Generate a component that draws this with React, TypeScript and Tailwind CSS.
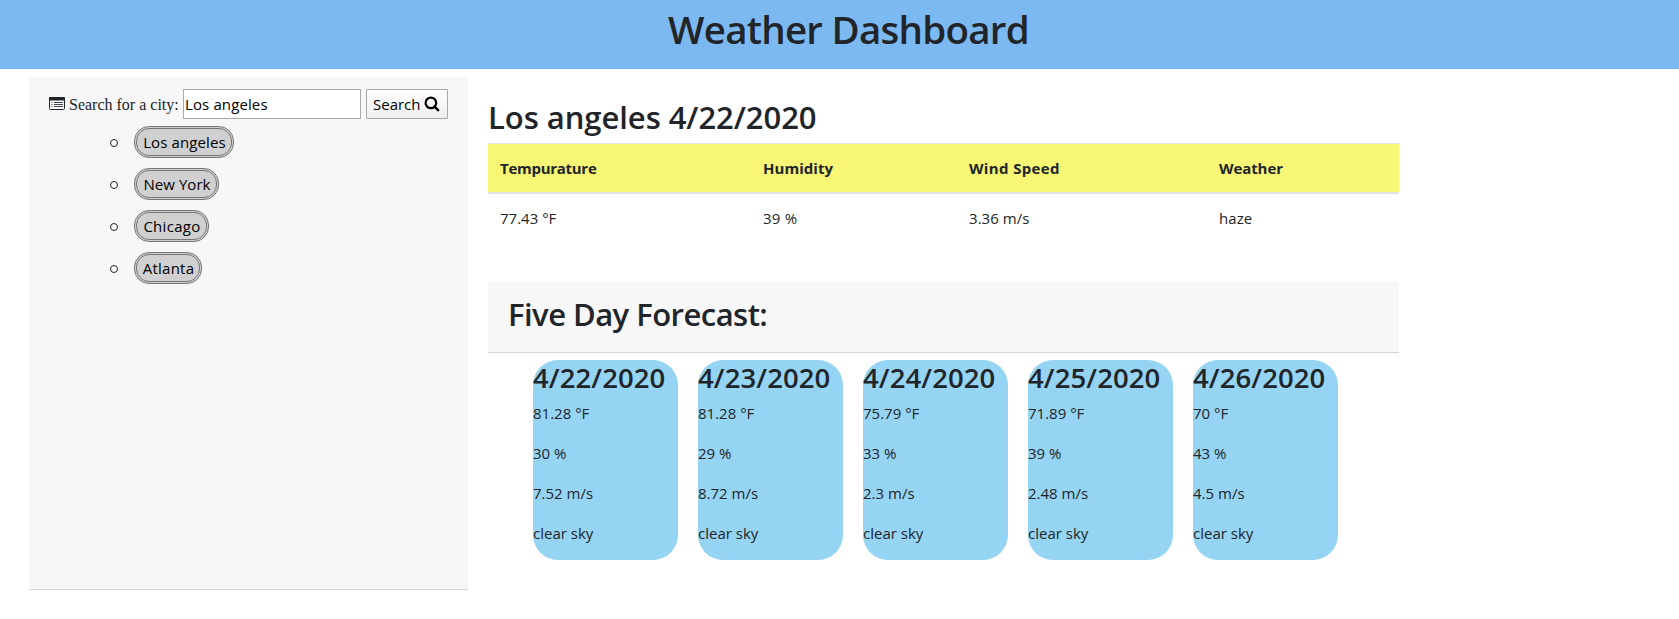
const cities = [
  { name: "Los angeles", width: "w-[100px]", tracking: "tracking-[0.12px]" },
  { name: "New York", width: "w-[85px]", tracking: "tracking-[0.05px]" },
  { name: "Chicago", width: "w-[75px]", tracking: "tracking-[0.3px]" },
  { name: "Atlanta", width: "w-[68px]", tracking: "tracking-[0.25px]" },
];

const conditions = [
  { label: "Tempurature", value: "77.43 °F", width: "w-[263px]", head: "-tracking-[0.28px]", cell: "tracking-normal" },
  { label: "Humidity", value: "39 %", width: "w-[206px]", head: "tracking-[0.03px]", cell: "tracking-[0.2px]" },
  { label: "Wind Speed", value: "3.36 m/s", width: "w-[250px]", head: "tracking-[0.36px]", cell: "tracking-[0.05px]" },
  { label: "Weather", value: "haze", width: "w-[192px]", head: "-tracking-[0.08px]", cell: "tracking-[0.1px]" },
];

const forecast = [
  { date: "4/22/2020", values: ["81.28 °F", "30 %", "7.52 m/s", "clear sky"] },
  { date: "4/23/2020", values: ["81.28 °F", "29 %", "8.72 m/s", "clear sky"] },
  { date: "4/24/2020", values: ["75.79 °F", "33 %", "2.3 m/s", "clear sky"] },
  { date: "4/25/2020", values: ["71.89 °F", "39 %", "2.48 m/s", "clear sky"] },
  { date: "4/26/2020", values: ["70 °F", "43 %", "4.5 m/s", "clear sky"] },
];

function ListIcon() {
  return (
    <svg width="16" height="14" viewBox="0 0 16 14" className="shrink-0 text-[#212529]">
      <rect x="0.5" y="0.5" width="15" height="12" rx="1" fill="#fff" fillOpacity="0.6" stroke="currentColor" />
      <rect x="0" y="0" width="16" height="3.6" rx="1" fill="currentColor" />
      <path d="M2 5.5h2M2 7.5h2M2 9.5h2" stroke="currentColor" strokeOpacity="0.45" />
      <path d="M5 5.5h9M5 7.5h9M5 9.5h9" stroke="currentColor" strokeOpacity="0.85" />
    </svg>
  );
}

function SearchIcon() {
  return (
    <svg width="16" height="16" viewBox="0 0 16 16" fill="none" stroke="#000" className="shrink-0">
      <circle cx="6.9" cy="6.9" r="5.3" strokeWidth="2.2" />
      <path d="M10.8 10.8l3.3 3.3" strokeWidth="2.5" strokeLinecap="round" />
    </svg>
  );
}

function Sidebar() {
  return (
    <aside className="h-[513px] w-[439px] rounded-t-[4px] border-b border-[#d6d6d6] bg-[#f7f7f7] pt-3">
      <form className="flex h-[30px] items-center pl-5" onSubmit={(e) => e.preventDefault()}>
        <ListIcon />
        <label
          htmlFor="city"
          className="ml-1 w-[114px] whitespace-nowrap pt-0.5 font-['Liberation_Serif',serif] text-base leading-6 text-[#212529]"
        >
          Search for a city:
        </label>
        <input
          id="city"
          defaultValue="Los angeles"
          className="h-[30px] w-[178px] border border-[#a9a9a9] bg-white px-px text-[15px] tracking-[0.12px] text-black outline-none"
        />
        <button className="ml-[5px] flex h-[30px] w-[82px] items-center gap-[3px] rounded-[1px] border border-[#a9a9a9] bg-linear-to-b from-white to-[#efefef] pl-1.5 text-[15px] text-black">
          Search
          <SearchIcon />
        </button>
      </form>
      <ul className="flex flex-col gap-2.5 pt-[7px] pl-[81px]">
        {cities.map((c) => (
          <li key={c.name} className="flex items-center gap-4">
            <span className="mt-px size-2 rounded-full border-[1.5px] border-[#212529]" />
            <button
              className={`h-8 rounded-[15px] border-3 border-double border-[#767676] bg-[#d0d0d0] pt-px pl-px text-center text-[15px] whitespace-nowrap text-black ${c.width} ${c.tracking}`}
            >
              {c.name}
            </button>
          </li>
        ))}
      </ul>
    </aside>
  );
}

export default function App() {
  return (
    <div className="h-[619px] overflow-hidden bg-white font-['Open_Sans','Noto_Sans',sans-serif] text-[15px] text-[#212529]">
      <header className="h-[69px] bg-[#7db9f1] pt-[5px] pl-[18px]">
        <h1 className="text-center text-[38.5px] leading-[48px] font-[540] -tracking-[0.75px]">Weather Dashboard</h1>
      </header>
      <div className="flex gap-5 pt-2 pl-[29px]">
        <Sidebar />
        <main className="w-[911px] pt-[21px]">
          <h2 className="mb-[7px] text-[31px] leading-[38px] font-[540] -tracking-[0.05px]">Los angeles 4/22/2020</h2>
          <table className="w-full table-fixed border-collapse text-left leading-6">
            <thead>
              <tr className="bg-[#f7f775]">
                {conditions.map((c) => (
                  <th
                    key={c.label}
                    className={`h-[49px] border-t border-b-2 border-[#dee2e6] px-3 py-0 font-bold ${c.width} ${c.head}`}
                  >
                    {c.label}
                  </th>
                ))}
              </tr>
            </thead>
            <tbody>
              <tr>
                {conditions.map((c) => (
                  <td key={c.label} className={`p-3 ${c.cell}`}>
                    {c.value}
                  </td>
                ))}
              </tr>
            </tbody>
          </table>
          <section className="mt-10">
            <h2 className="h-[71px] border-b border-[#d6d6d6] bg-[#f7f7f7] pt-[13px] pl-5 text-[31px] leading-[38px] font-[540] -tracking-[0.53px]">
              Five Day Forecast:
            </h2>
            <div className="flex gap-5 pt-[7px] pl-[45px]">
              {forecast.map((day) => (
                <article key={day.date} className="h-[200px] w-[145px] rounded-[25px] bg-[#96d4f3]">
                  <h3 className="mb-[5px] text-[27.5px] leading-[36px] font-[580] tracking-[0.1px]">{day.date}</h3>
                  {day.values.map((v) => (
                    <p key={v} className="mb-4 leading-6">
                      {v}
                    </p>
                  ))}
                </article>
              ))}
            </div>
          </section>
        </main>
      </div>
    </div>
  );
}
